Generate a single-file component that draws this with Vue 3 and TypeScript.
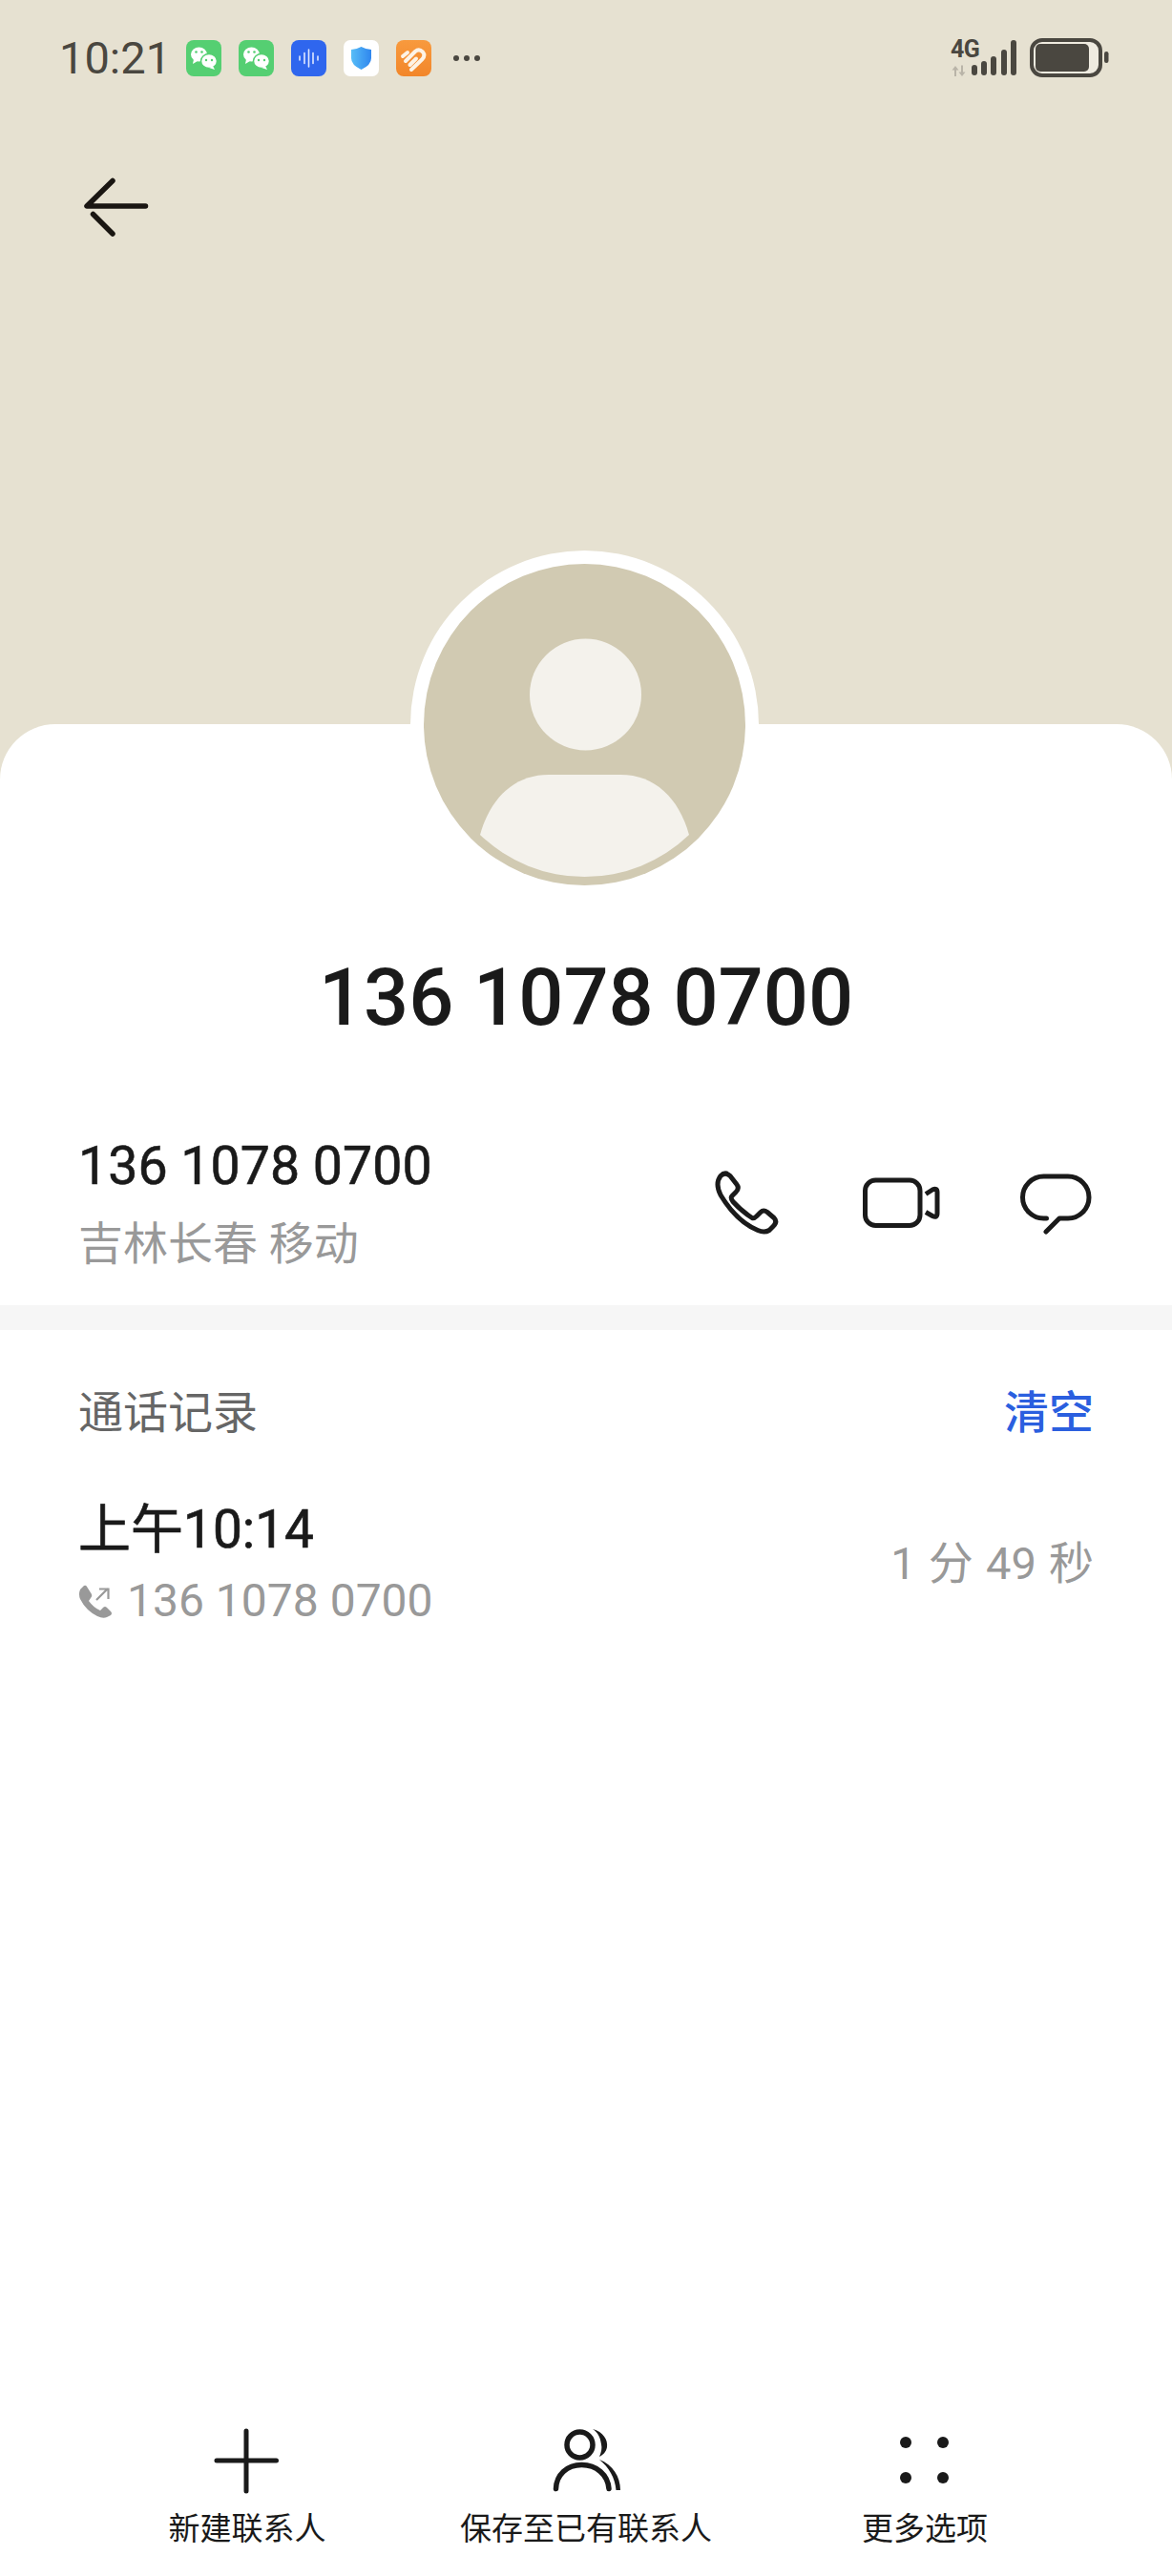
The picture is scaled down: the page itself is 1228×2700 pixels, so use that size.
<script setup lang="ts">
const phone: string = '136 1078 0700'
const actions: { label: string; kind: 'plus' | 'person' | 'dots' }[] = [
  { label: '新建联系人', kind: 'plus' },
  { label: '保存至已有联系人', kind: 'person' },
  { label: '更多选项', kind: 'dots' },
]
</script>

<template>
  <div class="page">
    <header class="hero">
      <div class="status">
        <div class="status-left">
          <span class="time">10:21</span>
          <div class="notifs">
            <svg class="notif" viewBox="0 0 37 38">
              <rect width="37" height="38" rx="8" fill="#55cf72" />
              <ellipse cx="13.5" cy="15" rx="8.5" ry="7.5" fill="#fff" />
              <path d="M8 20l-1 5 5-3z" fill="#fff" />
              <circle cx="10.5" cy="12.5" r="1.3" fill="#55cf72" />
              <circle cx="16.5" cy="12.5" r="1.3" fill="#55cf72" />
              <ellipse cx="24" cy="22" rx="8.5" ry="7.5" fill="#fff" stroke="#55cf72" stroke-width="1.5" />
              <path d="M28 27l2 4-6-2z" fill="#fff" />
              <circle cx="21" cy="21" r="1.2" fill="#55cf72" />
              <circle cx="27" cy="21" r="1.2" fill="#55cf72" />
            </svg>
            <svg class="notif" viewBox="0 0 37 38">
              <rect width="37" height="38" rx="8" fill="#55cf72" />
              <ellipse cx="13.5" cy="15" rx="8.5" ry="7.5" fill="#fff" />
              <path d="M8 20l-1 5 5-3z" fill="#fff" />
              <circle cx="10.5" cy="12.5" r="1.3" fill="#55cf72" />
              <circle cx="16.5" cy="12.5" r="1.3" fill="#55cf72" />
              <ellipse cx="24" cy="22" rx="8.5" ry="7.5" fill="#fff" stroke="#55cf72" stroke-width="1.5" />
              <path d="M28 27l2 4-6-2z" fill="#fff" />
              <circle cx="21" cy="21" r="1.2" fill="#55cf72" />
              <circle cx="27" cy="21" r="1.2" fill="#55cf72" />
            </svg>
            <svg class="notif" viewBox="0 0 37 38">
              <rect width="37" height="38" rx="8" fill="#2f66ee" />
              <g stroke="#dfe8ff" stroke-width="1.6" stroke-linecap="round">
                <path d="M9 17v4M14 13.5v11M18.500 10v18M23 13.5v11M28 17v4" />
              </g>
            </svg>
            <svg class="notif" viewBox="0 0 37 38">
              <defs>
                <linearGradient id="shield" x1="0" y1="0" x2="1" y2="0">
                  <stop offset="0" stop-color="#57bdf7" />
                  <stop offset="1" stop-color="#2f86ee" />
                </linearGradient>
              </defs>
              <rect width="37" height="38" rx="7" fill="#fff" />
              <path d="M18.500 7Q24 10 29 10V19Q29 26 18.500 31Q8 26 8 19V10Q13 10 18.500 7Z" fill="url(#shield)" />
            </svg>
            <svg class="notif" viewBox="0 0 37 38">
              <defs>
                <linearGradient id="orange" x1="0" y1="0" x2="0" y2="1">
                  <stop offset="0" stop-color="#f89a3e" />
                  <stop offset="1" stop-color="#f2862a" />
                </linearGradient>
              </defs>
              <rect width="37" height="38" rx="8" fill="url(#orange)" />
              <g fill="none" stroke="#fdf3e6" stroke-width="4" stroke-linecap="round" stroke-linejoin="round">
                <path d="M7 17L12 13" />
                <path d="M10 22L20 12Q24 8.500 28 12.500Q31 16 27.500 20L16 31" />
                <path d="M14.500 26L21 19.500" />
              </g>
            </svg>
          </div>
          <svg class="more" viewBox="0 0 36 12">
            <circle cx="6" cy="6" r="3" fill="#4a4740" />
            <circle cx="17" cy="6" r="3" fill="#4a4740" />
            <circle cx="28" cy="6" r="3" fill="#4a4740" />
          </svg>
        </div>
        <svg class="status-right" viewBox="990 36 175 50">
          <text x="996" y="60" class="net">4G</text>
          <path d="M1001 69l-3.500 4.500h2.500V80h2V73.500h2.500zM1008 80l3.500-4.500h-2.500V68.500h-2V75.500h-2.500z" fill="#b9b4a8" />
          <g fill="#4a4740">
            <rect x="1018" y="68" width="6" height="11" rx="3" />
            <rect x="1028" y="64" width="6" height="15" rx="3" />
            <rect x="1038" y="59" width="6" height="20" rx="3" />
            <rect x="1049" y="52" width="6" height="27" rx="3" />
            <rect x="1059" y="42" width="6" height="37" rx="3" />
            <rect x="1157" y="54" width="4.500" height="12" rx="2.200" />
          </g>
          <rect x="1081" y="42" width="72" height="37" rx="11" fill="#efebe0" stroke="#4a4740" stroke-width="4" />
          <rect x="1085" y="46" width="56" height="29" rx="5" fill="#4a4740" />
        </svg>
      </div>
      <svg class="back" viewBox="80 180 84 72" fill="none" stroke="#1a1612" stroke-width="5.500" stroke-linecap="round" stroke-linejoin="round">
        <path d="M118 189.500L91 216H152.500" />
        <path d="M97.500 224.500L118 245" />
      </svg>
    </header>

    <main class="card">
      <div class="avatar">
        <svg viewBox="0 0 337 337">
          <circle cx="168.500" cy="168.500" r="168.500" fill="#d1cab2" />
          <circle cx="169.500" cy="137" r="58.500" fill="#f4f2ec" />
          <path d="M59 284C70 245 95 221 131 221H206C242 221 267 245 278 284A158 158 0 0 1 59 284Z" fill="#f4f2ec" />
        </svg>
      </div>

      <h1 class="title">{{ phone }}</h1>

      <section class="contact">
        <div class="contact-text">
          <div class="number">{{ phone }}</div>
          <div class="place">吉林长春 移动</div>
        </div>
        <div class="contact-actions">
          <svg viewBox="734 1214.500 96 96" fill="none" stroke="#1a1a1a" stroke-width="5" stroke-linejoin="round">
            <path d="M755 1231Q760 1226 765 1231L772 1240Q775 1244 771 1248L767 1252Q765 1254 768 1258Q777 1268 788 1275Q790 1276 793 1273L797 1269Q800 1266 804 1269L811 1275Q815 1279 810 1284L806 1288Q801 1291 794 1288Q772 1279 755 1251Q749 1239 755 1231Z" />
          </svg>
          <svg viewBox="896 1214.500 96 96" fill="none" stroke="#1a1a1a" stroke-width="5" stroke-linejoin="round">
            <rect x="906.500" y="1235.500" width="57.500" height="47.500" rx="11" />
            <path d="M970 1250L977 1245.500Q982 1243 982 1248V1270Q982 1275.500 977 1273L970 1269" />
          </svg>
          <svg viewBox="1058 1214.500 96 96" fill="none" stroke="#1a1a1a" stroke-width="5" stroke-linecap="round" stroke-linejoin="round">
            <path d="M1096.500 1275.500H1093.500A22 22 0 0 1 1093.500 1231.500H1119A22 22 0 0 1 1119 1275.500H1110L1096 1289.500" />
          </svg>
        </div>
      </section>

      <div class="divider"></div>

      <section class="log-head">
        <span class="log-title">通话记录</span>
        <span class="log-clear">清空</span>
      </section>

      <section class="call">
        <div class="call-left">
          <div class="call-time">上午10:14</div>
          <div class="call-sub">
            <svg viewBox="84 1657 36 38">
              <path d="M86 1664L90 1660Q92 1659 93 1661L98 1669Q99 1671 97 1673L95 1676Q100 1683 107 1686L110 1683Q112 1681 114 1683L118 1687Q120 1689 118 1691L114 1693Q110 1695 104 1692Q92 1686 86 1674Q84 1669 86 1664Z" fill="#999" />
              <path d="M103 1675L115 1663M106 1663.500H115.500V1674" fill="none" stroke="#999" stroke-width="2.200" />
            </svg>
            <span>{{ phone }}</span>
          </div>
        </div>
        <div class="call-duration">1 分 49 秒</div>
      </section>

      <footer class="actions">
        <div v-for="a in actions" :key="a.label" class="action">
          <svg v-if="a.kind === 'plus'" viewBox="214 2544 90 76" fill="none" stroke="#1a1a1a" stroke-width="5" stroke-linecap="round">
            <path d="M258 2548V2611M227 2579H289.500" />
          </svg>
          <svg v-else-if="a.kind === 'person'" viewBox="569 2544 90 76" fill="none" stroke="#1a1a1a" stroke-linecap="round">
            <circle cx="607.500" cy="2562.500" r="13.500" stroke-width="5.500" />
            <path d="M582.500 2608.500C583 2594 594 2583.500 609.500 2583.500C625 2583.500 637 2594 638 2608.500" stroke-width="5.500" />
            <path d="M621 2546C632 2549 637 2557 636 2565C635 2570 632 2573 628 2575C630 2570 631 2566 630 2562C629 2555 627 2550 621 2546Z" fill="#1a1a1a" stroke="none" />
            <path d="M628 2578C642 2583 650 2596 650 2610L645.500 2610C644.500 2597 638 2586 628 2578Z" fill="#1a1a1a" stroke="none" />
          </svg>
          <svg v-else viewBox="924 2544 90 76" fill="#1a1a1a">
            <circle cx="949" cy="2560" r="6" />
            <circle cx="988" cy="2560" r="6" />
            <circle cx="949" cy="2597" r="6" />
            <circle cx="988" cy="2597" r="6" />
          </svg>
          <span class="action-label">{{ a.label }}</span>
        </div>
      </footer>
    </main>
  </div>
</template>

<style scoped>
.page {
  width: 1228px;
  height: 2700px;
  display: flex;
  flex-direction: column;
  overflow: hidden;
  background: #e6e1d1;
  font-family: Roboto, "Noto Sans CJK SC", sans-serif;
}
.hero {
  height: 759px;
  flex: none;
}
.status {
  display: flex;
  justify-content: space-between;
  align-items: center;
  height: 50px;
  padding: 36px 63px 0 62px;
}
.status-left {
  display: flex;
  align-items: center;
}
.time {
  font-size: 47px;
  line-height: 50px;
  color: #4a4740;
  width: 133px;
}
.notifs {
  display: flex;
  gap: 18px;
}
.notif {
  display: block;
  width: 37px;
  height: 38px;
}
.more {
  display: block;
  width: 36px;
  height: 12px;
  margin-left: 20px;
}
.status-right {
  display: block;
  width: 175px;
  height: 50px;
}
.net {
  font-family: Roboto, sans-serif;
  font-size: 25px;
  font-weight: 700;
  fill: #4a4740;
  letter-spacing: -0.5px;
}
.back {
  display: block;
  width: 84px;
  height: 72px;
  margin: 94px 0 0 80px;
}
.card {
  flex: 1;
  display: flex;
  flex-direction: column;
  background: #fff;
  border-radius: 58px 58px 0 0;
}
.avatar {
  width: 337px;
  height: 337px;
  padding: 14px;
  margin: -182px 0 0 430px;
  background: #fff;
  border-radius: 50%;
  box-sizing: content-box;
}
.avatar svg {
  display: block;
  width: 337px;
  height: 337px;
}
.title {
  margin: 56px 0 0;
  text-align: center;
  font-size: 83px;
  line-height: 96px;
  font-weight: 500;
  color: #1a1a1a;
}
.contact {
  display: flex;
  justify-content: space-between;
  align-items: center;
  margin-top: 97px;
  padding: 0 74px 0 82px;
}
.number {
  font-size: 55.500px;
  line-height: 64px;
  -webkit-text-stroke: 0.6px #1a1a1a;
  color: #1a1a1a;
}
.place {
  margin-top: 17px;
  font-size: 47px;
  line-height: 64px;
  color: #999;
}
.contact-actions {
  display: flex;
  gap: 66px;
}
.contact-actions svg {
  display: block;
  width: 96px;
  height: 96px;
}
.divider {
  height: 26px;
  margin-top: 32px;
  background: #f6f6f6;
  flex: none;
}
.log-head {
  display: flex;
  justify-content: space-between;
  margin-top: 55px;
  padding: 0 82px;
  font-size: 47px;
  line-height: 64px;
}
.log-title {
  color: #666;
}
.log-clear {
  color: #2b5fdf;
  font-weight: 500;
}
.call {
  display: flex;
  justify-content: space-between;
  align-items: center;
  margin-top: 58px;
  padding: 0 82px;
}
.call-time {
  font-size: 55px;
  line-height: 64px;
  -webkit-text-stroke: 0.7px #1a1a1a;
  color: #1a1a1a;
}
.call-sub {
  display: flex;
  align-items: center;
  gap: 15px;
  margin-top: 15px;
  font-size: 48px;
  line-height: 56px;
  color: #999;
}
.call-sub svg {
  display: block;
  width: 36px;
  height: 38px;
}
.call-duration {
  font-size: 47px;
  line-height: 64px;
  word-spacing: 1.5px;
  color: #999;
}
.actions {
  display: grid;
  grid-template-columns: repeat(3, 355px);
  margin-top: auto;
  padding: 0 81.5px 29px;
}
.action {
  display: flex;
  flex-direction: column;
  align-items: center;
  gap: 11px;
}
.action svg {
  display: block;
  width: 90px;
  height: 76px;
}
.action-label {
  font-size: 33px;
  line-height: 40px;
  color: #1a1a1a;
}
</style>
